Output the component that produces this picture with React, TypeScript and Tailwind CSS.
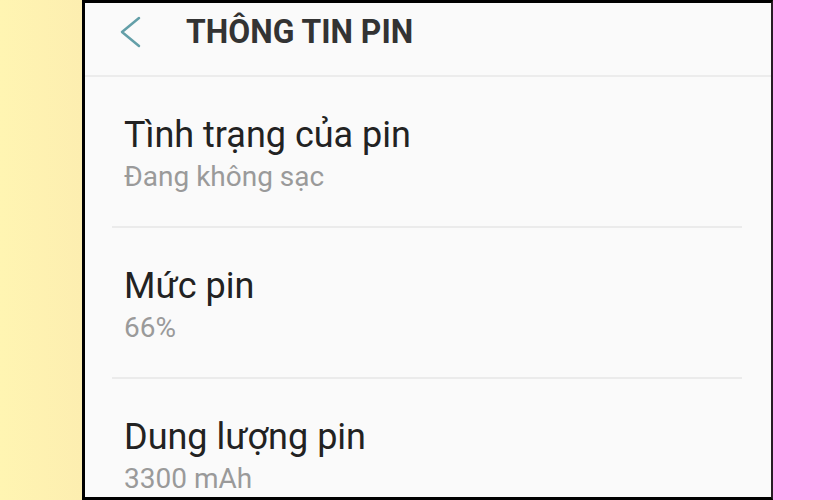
import React from "react";

const items = [
  { title: "Tình trạng của pin", sub: "Đang không sạc" },
  { title: "Mức pin", sub: "66%" },
  { title: "Dung lượng pin", sub: "3300 mAh" },
];

export default function App() {
  return (
    <div className="flex h-[500px] w-[840px] overflow-hidden" style={{ fontFamily: "Roboto, 'Noto Sans', sans-serif" }}>
      <div className="w-[82px] shrink-0 bg-gradient-to-r from-[#fff5b2] to-[#fdeeb0]" />
      <div className="flex w-[691px] shrink-0 flex-col border-t-[3px] border-b-[3px] border-l-[3px] border-r-2 border-l-black border-t-black border-b-black border-r-[#2a1a2a] bg-[#fafafa]">
        <div className="flex h-[72px] shrink-0 items-start">
          <svg className="ml-[34px] mt-[13px]" width="24" height="32" viewBox="0 0 24 32" fill="none">
            <path d="M20 2 L3 16 L20 30" stroke="#639fa8" strokeWidth="2.5" strokeLinecap="round" strokeLinejoin="round" />
          </svg>
          <div className="ml-[43px] mt-[10px] origin-left scale-x-[0.965] text-[33px] font-bold leading-[38px] text-[#333333]">
            THÔNG TIN PIN
          </div>
        </div>
        <div className="h-[2px] shrink-0 bg-[#ececec]" />
        {items.map((it, i) => (
          <div key={i} className="flex shrink-0 flex-col">
            <div className="flex h-[149px] flex-col pl-[39px] pt-[37px]">
              <div className="text-[36px] leading-[42px] text-[#222222]">{it.title}</div>
              <div className="mt-[5px] text-[28px] leading-[32px] text-[#9a9a9a]">{it.sub}</div>
            </div>
            {i < items.length - 1 && <div className="ml-[27px] mr-[29px] h-[2px] bg-[#ebebeb]" />}
          </div>
        ))}
      </div>
      <div className="flex-1 bg-[#ffadf6]" />
    </div>
  );
}
